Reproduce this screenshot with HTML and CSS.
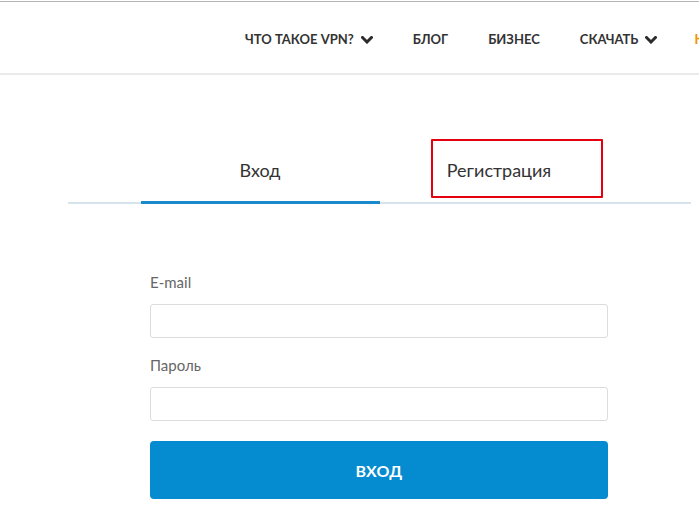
FILE: index.html
```html
<!DOCTYPE html>
<html lang="ru">
<head>
<meta charset="utf-8">
<title>Вход</title>
<link rel="stylesheet" href="styles.css">
</head>
<body>
<header class="header">
  <nav class="nav">
    <a class="nav-item" href="#">ЧТО ТАКОЕ VPN? <svg class="chev" width="12" height="8" viewBox="0 0 12 8"><polyline points="1.5,1.5 6,6 10.5,1.5" fill="none" stroke="#2b2b2b" stroke-width="3" stroke-linecap="square" stroke-linejoin="miter"/></svg></a>
    <a class="nav-item" href="#">БЛОГ</a>
    <a class="nav-item" href="#">БИЗНЕС</a>
    <a class="nav-item" href="#">СКАЧАТЬ <svg class="chev" width="12" height="8" viewBox="0 0 12 8"><polyline points="1.5,1.5 6,6 10.5,1.5" fill="none" stroke="#2b2b2b" stroke-width="3" stroke-linecap="square" stroke-linejoin="miter"/></svg></a>
    <a class="nav-item nav-accent" href="#">КАБИНЕТ</a>
  </nav>
</header>

<main class="main">
  <div class="tabs">
    <div class="tab tab-active">Вход</div>
    <div class="tab">Регистрация<span class="highlight"></span></div>
  </div>

  <form class="form">
    <div class="field">
      <label class="label" for="email">E-mail</label>
      <input class="input" id="email" type="text">
    </div>
    <div class="field">
      <label class="label" for="pass">Пароль</label>
      <input class="input" id="pass" type="password">
    </div>
    <button class="btn" type="button">ВХОД</button>
  </form>
</main>
</body>
</html>
```
FILE: styles.css
```css
* { box-sizing: border-box; }
html, body { margin: 0; padding: 0; background: #fff; }
body {
  font-family: Lato, "Noto Sans", "Liberation Sans", sans-serif;
  color: #333;
  overflow: hidden;
}
.header {
  margin-top: 1px;
  border-top: 1px solid #b5b5b5;
  border-bottom: 2px solid #e9eaea;
  height: 74px;
  overflow: hidden;
}
.nav {
  display: flex;
  align-items: flex-start;
  gap: 40px;
  padding: 29px 0 0 245px;
  white-space: nowrap;
}
.nav-item {
  flex-shrink: 0;
  font-size: 13px;
  font-weight: 700;
  color: #333;
  text-decoration: none;
  display: flex;
  align-items: center;
  gap: 7px;
  line-height: 16px;
}
.chev { display: block; margin-top: 1px; }
.nav-accent { color: #f39200; margin-left: -3px; }

.main { padding: 0; }
.tabs {
  margin: 64px 0 0 68px;
  width: 623px;
  border-bottom: 2px solid #d4e3ec;
  display: flex;
  justify-content: center;
}
.tab {
  position: relative;
  width: 239px;
  text-align: center;
  font-size: 18px;
  line-height: 21px;
  color: #333;
  padding: 21px 0 20px;
  border-bottom: 3px solid transparent;
  margin-bottom: -2px;
}
.tab-active { border-bottom-color: #1a8acc; }
.highlight {
  position: absolute;
  left: 51px;
  top: 0;
  width: 172px;
  height: 59px;
  border: 2px solid #e5000f;
  border-radius: 1px;
}

.form {
  margin: 69px 0 0 150px;
  width: 458px;
}
.field + .field { margin-top: 18px; }
.label {
  display: block;
  font-size: 15px;
  line-height: 18px;
  color: #666;
  margin-bottom: 13px;
}
.input {
  display: block;
  width: 100%;
  height: 34px;
  border: 1px solid #dcdcdc;
  border-radius: 3px;
  background: #fff;
  font: inherit;
  padding: 0 10px;
  outline: none;
}
.btn {
  display: block;
  width: 100%;
  height: 58px;
  margin-top: 20px;
  border: 0;
  border-radius: 4px;
  background: #058bcf;
  color: #fff;
  font-family: Lato, "Noto Sans", sans-serif;
  font-size: 16px;
  font-weight: 700;
  letter-spacing: 0.2px;
}
```
